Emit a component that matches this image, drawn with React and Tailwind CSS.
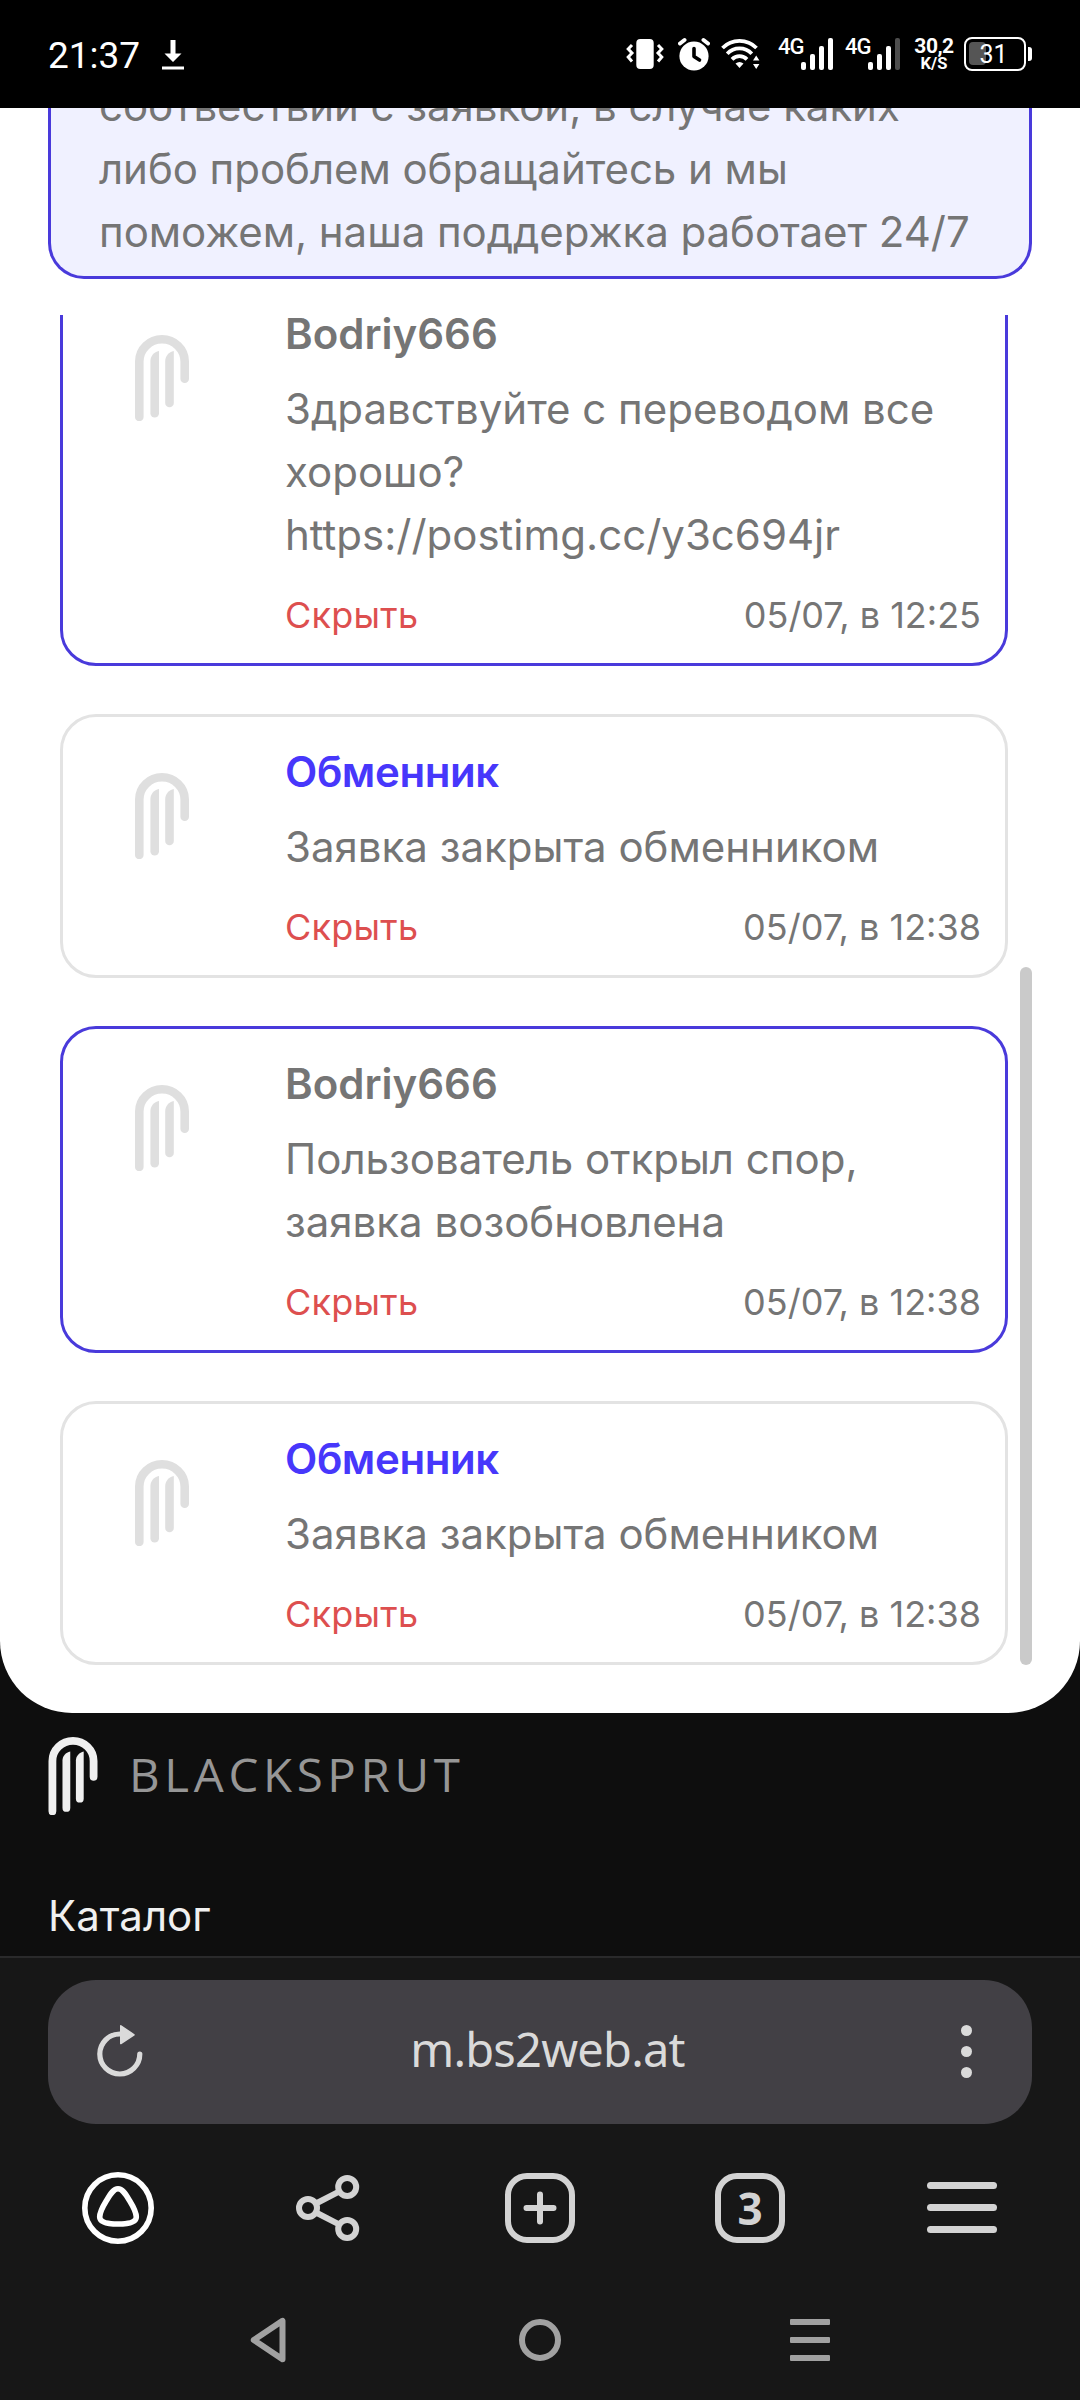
import React from 'react';

const messages = [
  {
    id: 1,
    author: 'Bodriy666',
    lines: ['Здравствуйте с переводом все', 'хорошо?', 'https://postimg.cc/y3c694jr'],
    date: '05/07, в 12:25',
    own: true,
  },
  { id: 2, author: 'Обменник', lines: ['Заявка закрыта обменником'], date: '05/07, в 12:38', own: false },
  {
    id: 3,
    author: 'Bodriy666',
    lines: ['Пользователь открыл спор,', 'заявка возобновлена'],
    date: '05/07, в 12:38',
    own: true,
  },
  { id: 4, author: 'Обменник', lines: ['Заявка закрыта обменником'], date: '05/07, в 12:38', own: false },
];

function Logo({ className }) {
  return (
    <svg viewBox="0 0 54 86" className={className} fill="none">
      <path
        d="M4.3 82 V26.5 A22.7 22.2 0 0 1 49.7 26.5 V43.8"
        stroke="currentColor"
        strokeWidth="8.6"
        strokeLinecap="round"
      />
      <path d="M24 16 V78.2 a4.3 4.3 0 0 1 -8.6 0 V26 C15.4 21 19 17 24 16 Z" fill="currentColor" />
      <path d="M38.8 16 V68 a4.3 4.3 0 0 1 -8.6 0 V26 C30.2 21 34 17 38.8 16 Z" fill="currentColor" />
    </svg>
  );
}

function Signal({ weak }) {
  return (
    <div className="flex items-start">
      <span className="-mt-[7px] w-[23px] font-['Roboto',sans-serif] text-[22px] leading-[32px] font-medium tracking-[-1px]">
        4G
      </span>
      <svg viewBox="0 0 32 32" className="size-8" fill="currentColor">
        <rect x="0" y="24" width="5" height="8" rx="2" />
        <rect x="9" y="16" width="5" height="16" rx="2" />
        <rect x="18" y="8" width="5" height="24" rx="2" />
        <rect x="27" y="0" width="5" height="32" rx="2" fill={weak ? '#4d4d4d' : 'currentColor'} />
      </svg>
    </div>
  );
}

function StatusBar() {
  return (
    <header className="flex h-[108px] shrink-0 items-center bg-black px-12 text-white">
      <span className="mt-[3px] w-[114px] font-['Roboto',sans-serif] text-[37px] leading-none">21:37</span>
      <svg viewBox="0 0 22 30" className="mt-px h-[30px] w-[22px]" fill="currentColor">
        <path d="M8.5 0 H13.5 V13.5 H19.5 L11 22 L2.5 13.5 H8.5 Z" />
        <rect x="0" y="26.5" width="22" height="3" />
      </svg>

      <div className="ml-auto flex items-center">
        <svg viewBox="0 0 38 32" className="mr-[14px] h-8 w-[38px]" fill="none">
          <rect x="10.3" y="1" width="17.4" height="30" rx="4" fill="currentColor" />
          <path
            d="M6 7 L2.2 11 L6 15 L2.2 19 L6 23.5 M32 7 L35.8 11 L32 15 L35.8 19 L32 23.5"
            stroke="currentColor"
            strokeWidth="3"
          />
        </svg>
        <svg viewBox="0 0 32 34" className="mr-[11px] h-[34px] w-8" fill="none">
          <circle cx="16" cy="19" r="14.6" fill="currentColor" />
          <path
            d="M2 6.5 L6.5 3 M30 6.5 L25.5 3"
            stroke="currentColor"
            strokeWidth="4"
            strokeLinecap="round"
          />
          <path d="M16 11.5 V19.5 L21.5 23" stroke="black" strokeWidth="3.6" strokeLinecap="round" strokeLinejoin="round" />
        </svg>
        <svg viewBox="0 0 39 32" className="mr-[18px] h-8 w-[39px]" fill="none">
          <path
            d="M1.5 10 A24 24 0 0 1 35.5 10 M6.2 15.7 A17 17 0 0 1 30.8 15.7 M11 21.3 A10.5 10.5 0 0 1 26 21.3"
            stroke="currentColor"
            strokeWidth="3.8"
          />
          <path d="M14.5 25.5 Q18.5 22.5 22.5 25.5 L18.5 30 Z" fill="currentColor" />
          <path d="M32 22.5 L35.2 17.5 L38.4 22.5 Z M32 26 L35.2 31 L38.4 26 Z" fill="currentColor" />
        </svg>
        <Signal />
        <div className="w-3" />
        <Signal weak />
        <div className="mt-[2px] mr-[10px] ml-[14px] flex w-10 flex-col items-center font-['Roboto',sans-serif] font-bold">
          <span className="text-[21px] leading-[18px] tracking-[-0.5px]">30,2</span>
          <span className="text-[16.5px] leading-[18px]">K/S</span>
        </div>
        <div className="relative flex h-[34px] w-[62px] items-center justify-center rounded-[8px] border-[2.5px] border-white">
          <div className="absolute top-[3px] left-[3px] h-[23px] w-[17px] rounded-[4px] bg-[#555]" />
          <span className="relative mt-px -ml-[3px] font-['Roboto',sans-serif] text-[25px] leading-none">31</span>
        </div>
        <div className="ml-[2px] h-[14px] w-1 rounded-r-[3px] bg-white" />
      </div>
    </header>
  );
}

function Message({ author, lines, date, own }) {
  return (
    <article
      className={`flex shrink-0 rounded-[36px] border-[3px] pt-[23px] pr-6 pb-[21px] pl-[72px] ${
        own ? 'border-[#493adb]' : 'border-[#e3e3e3]'
      }`}
    >
      <Logo className="mt-[33px] mr-[96px] h-[86px] w-[54px] shrink-0 text-[#dfdfdf]" />
      <div className="flex-1">
        <h3
          className={`text-[42px] leading-[63px] font-semibold ${
            own ? 'text-[#757575]' : 'tracking-[-0.4px] text-[#4737fb]'
          }`}
        >
          {author}
        </h3>
        <div className="mt-3 text-[42px] leading-[63px] whitespace-nowrap text-[#757575]">
          {lines.map((line) => (
            <p key={line}>{line}</p>
          ))}
        </div>
        <div className="mt-[22px] flex justify-between text-[36px] leading-[54px]">
          <button className="tracking-[0.25px] text-[#dd4f4f]">Скрыть</button>
          <time className="text-[#757575]">{date}</time>
        </div>
      </div>
    </article>
  );
}

function BrowserBar() {
  return (
    <div className="h-[288px] shrink-0 border-t-2 border-[#2a2a2b] bg-[#171717] px-12 pt-[22px]">
      <div className="flex h-36 items-center justify-between rounded-[48px] bg-[#424045] pr-[60px] pl-[48px] text-[#dadada]">
        <svg viewBox="0 0 48 54" className="h-[54px] w-12" fill="none">
          <path
            d="M43.8 29 A20 20 0 1 1 23.8 9"
            stroke="currentColor"
            strokeWidth="5.2"
            strokeLinecap="round"
          />
          <path
            d="M24.8 0.8 L38 9.8 L24.8 18.5 Z"
            fill="currentColor"
            stroke="currentColor"
            strokeWidth="1.6"
            strokeLinejoin="round"
          />
        </svg>
        <span className="mr-[10px] mb-[6px] font-['Noto_Sans',sans-serif] text-[47px] leading-none tracking-[-0.8px]">
          m.bs2web.at
        </span>
        <div className="mb-px flex flex-col gap-[10px]">
          <i className="size-[11px] rounded-full bg-current" />
          <i className="size-[11px] rounded-full bg-current" />
          <i className="size-[11px] rounded-full bg-current" />
        </div>
      </div>

      <nav className="-mx-9 mt-12 grid grid-cols-5 justify-items-center text-[#d3d3d3]">
        <svg viewBox="0 0 72 72" className="size-[72px] text-white" fill="none" stroke="currentColor" strokeWidth="5.6">
          <circle cx="36" cy="36" r="33.2" />
          <path d="M36 16.8 C40.5 16.8 43.5 22 47.5 28.5 C51.5 35 54.3 40.5 54.3 45 C54.3 50.5 47 52 36 52 C25 52 17.7 50.5 17.7 45 C17.7 40.5 20.5 35 24.5 28.5 C28.5 22 31.5 16.8 36 16.8 Z" />
        </svg>
        <svg viewBox="0 0 72 72" className="size-[72px]" fill="none" stroke="currentColor" strokeWidth="6">
          <circle cx="15" cy="36" r="9" />
          <circle cx="54.2" cy="15" r="9" />
          <circle cx="54.2" cy="57" r="9" />
          <path d="M23 31.5 L46.5 19.3 M23 40.5 L46.5 52.7" />
        </svg>
        <svg viewBox="0 0 72 72" className="size-[72px]" fill="none" stroke="currentColor" strokeWidth="6">
          <rect x="4" y="4" width="64" height="64" rx="19" />
          <path d="M36 22.5 V49.5 M22.5 36 H49.5" strokeLinecap="round" />
        </svg>
        <div className="mt-px -ml-[2px] flex size-[70px] items-center justify-center rounded-[22px] border-[6px] border-current font-['Noto_Sans',sans-serif] text-[44px] leading-none font-bold">
          3
        </div>
        <div className="flex h-[71px] w-[70px] flex-col justify-center gap-[15px]">
          <i className="h-[7px] rounded-full bg-current" />
          <i className="h-[7px] rounded-full bg-current" />
          <i className="h-[7px] rounded-full bg-current" />
        </div>
      </nav>
    </div>
  );
}

function SystemNav() {
  return (
    <div className="grid flex-1 grid-cols-3 items-center justify-items-center bg-[#171717] px-[135px] pt-9 text-[#a1a1a1]">
      <svg viewBox="0 0 36 46" className="-ml-[5px] h-[46px] w-9" fill="none">
        <path d="M32.5 3.8 V42.2 L3.8 23 Z" stroke="currentColor" strokeWidth="6" strokeLinejoin="round" />
      </svg>
      <div className="size-[42px] rounded-full border-[6px] border-current" />
      <div className="flex w-10 flex-col gap-3">
        <i className="h-[6px] rounded-[1px] bg-current" />
        <i className="h-[6px] rounded-[1px] bg-current" />
        <i className="h-[6px] rounded-[1px] bg-current" />
      </div>
    </div>
  );
}

export default function App() {
  return (
    <div className="flex h-[2400px] w-[1080px] flex-col overflow-hidden bg-[#0e0e0e] font-['Inter',sans-serif]">
      <StatusBar />

      <main className="flex h-[1605px] shrink-0 flex-col rounded-b-[72px] bg-white px-12">
        {/* notice scrolled half under the status bar */}
        <section className="h-[171px] shrink-0 overflow-hidden rounded-b-[36px] border-x-[3px] border-b-[3px] border-[#493adb] bg-[#f0f1ff] px-[48px]">
          <p className="-mt-[34px] text-[42px] leading-[63px] tracking-[-0.05px] whitespace-nowrap text-[#757575]">
            соотвествии с заявкой, в случае каких
            <br />
            либо проблем обращайтесь и мы
            <br />
            поможем, наша поддержка работает 24/7
          </p>
        </section>

        <section className="mt-9 flex h-[1350px] shrink-0 gap-3 overflow-hidden pl-3">
          <div className="flex flex-1 flex-col justify-end gap-12">
            {messages.map((m) => (
              <Message key={m.id} {...m} />
            ))}
          </div>
          <div className="h-[698px] w-3 self-end rounded-full bg-[#cacaca]" />
        </section>
      </main>

      <footer className="h-[243px] shrink-0 overflow-hidden px-12 pt-6">
        <div className="flex items-center text-[#f0f0f0]">
          <Logo className="h-[78px] w-[50px]" />
          <span className="-mt-[2px] ml-[31px] origin-left scale-x-[1.055] font-['Open_Sans',sans-serif] text-[45px] leading-[60px] font-normal tracking-[4.4px] text-[#969696]">
            BLACKSPRUT
          </span>
        </div>
        <a className="mt-[69px] block text-[42px] leading-[63px] text-[#f0f0f0]">Каталог</a>
      </footer>

      <BrowserBar />
      <SystemNav />
    </div>
  );
}
